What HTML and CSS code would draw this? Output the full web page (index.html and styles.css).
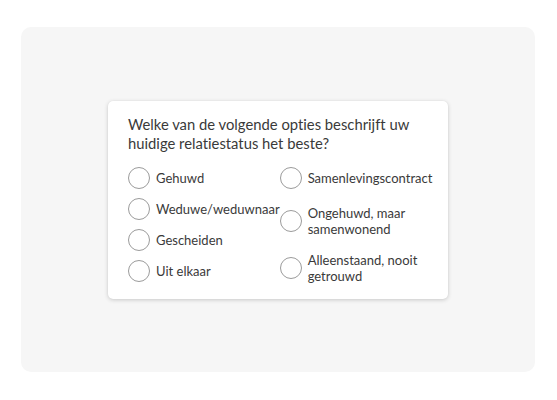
FILE: index.html
```html
<!DOCTYPE html>
<html lang="nl">
<head>
<meta charset="utf-8">
<link rel="stylesheet" href="styles.css">
</head>
<body>
<div class="stage">
  <div class="panel">
    <div class="card">
      <div class="question">Welke van de volgende opties beschrijft uw huidige relatiestatus het beste?</div>
      <div class="options">
        <div class="col col-left">
          <label class="opt"><span class="radio"></span><span class="txt">Gehuwd</span></label>
          <label class="opt"><span class="radio"></span><span class="txt">Weduwe/weduwnaar</span></label>
          <label class="opt"><span class="radio"></span><span class="txt">Gescheiden</span></label>
          <label class="opt"><span class="radio"></span><span class="txt">Uit elkaar</span></label>
        </div>
        <div class="col col-right">
          <label class="opt"><span class="radio"></span><span class="txt">Samenlevingscontract</span></label>
          <label class="opt opt-two"><span class="radio"></span><span class="txt">Ongehuwd, maar<br>samenwonend</span></label>
          <label class="opt"><span class="radio"></span><span class="txt">Alleenstaand, nooit<br>getrouwd</span></label>
        </div>
      </div>
    </div>
  </div>
</div>
</body>
</html>
```
FILE: styles.css
```css
html, body {
  margin: 0;
  padding: 0;
  background: #ffffff;
}
.stage {
  width: 557px;
  height: 400px;
  padding: 27px 22px 28px 21px;
  box-sizing: border-box;
}
.panel {
  width: 514px;
  height: 345px;
  background: #f6f6f6;
  border-radius: 10px;
  display: flex;
  align-items: center;
  justify-content: center;
}
.card {
  width: 340px;
  height: 198px;
  box-sizing: border-box;
  background: #ffffff;
  border-radius: 5px;
  box-shadow: 0 1px 4px rgba(0,0,0,0.18), 0 0 1px rgba(0,0,0,0.08);
  padding: 14px 20px 0 20px;
  font-family: Lato, "Liberation Sans", sans-serif;
  font-variant-ligatures: none;
  color: #3a3a3a;
}
.question {
  font-size: 14.8px;
  line-height: 19px;
}
.options {
  display: flex;
  margin-top: 14px;
}
.col {
  display: flex;
  flex-direction: column;
}
.col-left {
  width: 153px;
  gap: 9px;
}
.col-right {
  gap: 15px;
}
.opt {
  display: flex;
  align-items: center;
  gap: 6px;
  font-size: 13px;
  line-height: 16px;
}
.opt-two {
  margin-top: 1px;
}
.radio {
  width: 20px;
  height: 20px;
  border: 1px solid #9b9b9b;
  border-radius: 50%;
  flex: none;
  background: #fff;
}
.txt {
  display: block;
}
```
